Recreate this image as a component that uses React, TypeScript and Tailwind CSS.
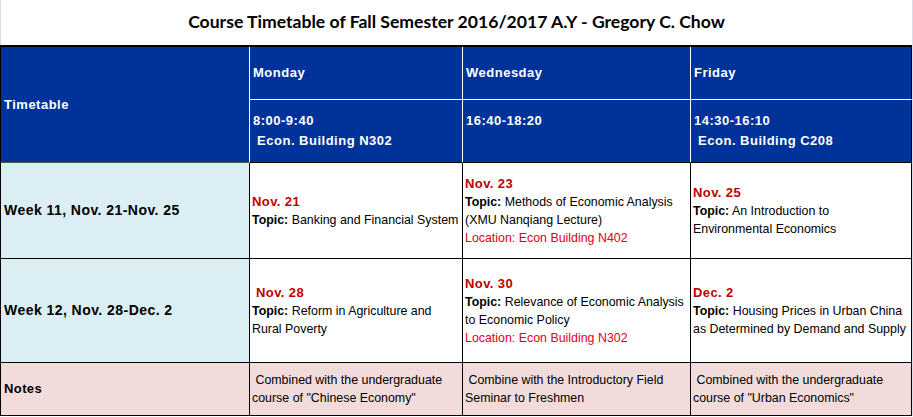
import React from "react";

const dateCls = "text-[#c00000] font-bold text-[13px] tracking-[0.4px]";
const headCls = "text-white font-bold text-[13px] tracking-[0.5px]";
const labelCls = "font-bold text-[14px] tracking-[0.45px]";

function Topic({ children }: { children: React.ReactNode }) {
  return (
    <div>
      <span className="font-bold">Topic:</span> {children}
    </div>
  );
}

export default function App() {
  return (
    <div className="w-[913px] h-[417px] bg-white font-['Liberation_Sans',Arial,sans-serif] text-[12.4px] text-black">
      {/* Title */}
      <div className="h-[45px] w-[913px] border-l border-r border-[#d8dde8] flex items-center justify-center">
        <h1 className="font-['Lato',sans-serif] font-bold text-[17.6px] text-black">
          Course Timetable of Fall Semester 2016/2017 A.Y - Gregory C. Chow
        </h1>
      </div>

      {/* Table */}
      <div className="w-[913px] border-r border-[#d8dde8]">
        <div className="w-[912px] border-t-2 border-l border-black grid grid-cols-[249px_213px_228px_221px]">
          {/* Header */}
          <div className={`row-span-2 h-[116px] bg-[#003399] border-r border-r-white border-b border-b-[#555] flex items-center pl-[3px] ${headCls}`}>
            Timetable
          </div>
          <div className={`h-[53px] bg-[#003399] border-r border-b border-white flex items-center pl-[3px] ${headCls}`}>
            Monday
          </div>
          <div className={`h-[53px] bg-[#003399] border-r border-b border-white flex items-center pl-[3px] ${headCls}`}>
            Wednesday
          </div>
          <div className={`h-[53px] bg-[#003399] border-r border-r-black border-b border-b-white flex items-center pl-[3px] ${headCls}`}>
            Friday
          </div>
          <div className={`h-[63px] bg-[#003399] border-r border-r-white border-b border-b-black flex flex-col justify-center pl-[3px] leading-[20px] ${headCls}`}>
            <div>8:00-9:40</div>
            <div>&nbsp;Econ. Building N302</div>
          </div>
          <div className={`h-[63px] bg-[#003399] border-r border-r-white border-b border-b-black flex flex-col justify-center pl-[3px] leading-[20px] ${headCls}`}>
            <div>16:40-18:20</div>
            <div>&nbsp;</div>
          </div>
          <div className={`h-[63px] bg-[#003399] border-r border-b border-black flex flex-col justify-center pl-[3px] leading-[20px] ${headCls}`}>
            <div>14:30-16:10</div>
            <div>&nbsp;Econ. Building C208</div>
          </div>

          {/* Week 11 */}
          <div className={`h-[96px] bg-[#daeef3] border-r border-b border-black flex items-center pl-[3px] ${labelCls}`}>
            Week 11, Nov. 21-Nov. 25
          </div>
          <div className="h-[96px] border-r border-b border-black flex flex-col justify-center pl-[2px] leading-[18px]">
            <div className={dateCls}>Nov. 21</div>
            <Topic>Banking and Financial System</Topic>
          </div>
          <div className="h-[96px] border-r border-b border-black flex flex-col justify-center pl-[2px] leading-[18px]">
            <div className={dateCls}>Nov. 23</div>
            <Topic>Methods of Economic Analysis</Topic>
            <div>(XMU Nanqiang Lecture)</div>
            <div className="text-[#e0001b]">Location: Econ Building N402</div>
          </div>
          <div className="h-[96px] border-r border-b border-black flex flex-col justify-center pl-[2px] leading-[18px]">
            <div className={dateCls}>Nov. 25</div>
            <Topic>An Introduction to</Topic>
            <div>Environmental Economics</div>
          </div>

          {/* Week 12 */}
          <div className={`h-[104px] bg-[#daeef3] border-r border-b border-black flex items-center pl-[3px] ${labelCls}`}>
            Week 12, Nov. 28-Dec. 2
          </div>
          <div className="h-[104px] border-r border-b border-black flex flex-col justify-center pl-[2px] leading-[18px]">
            <div className={dateCls}>&nbsp;Nov. 28</div>
            <Topic>Reform in Agriculture and</Topic>
            <div>Rural Poverty</div>
          </div>
          <div className="h-[104px] border-r border-b border-black flex flex-col justify-center pl-[2px] leading-[18px]">
            <div className={dateCls}>Nov. 30</div>
            <Topic>Relevance of Economic Analysis</Topic>
            <div>to Economic Policy</div>
            <div className="text-[#e0001b]">Location: Econ Building N302</div>
          </div>
          <div className="h-[104px] border-r border-b border-black flex flex-col justify-center pl-[2px] leading-[18px]">
            <div className={dateCls}>Dec. 2</div>
            <Topic>Housing Prices in Urban China</Topic>
            <div>as Determined by Demand and Supply</div>
          </div>

          {/* Notes */}
          <div className="h-[53px] bg-[#f2dcdb] border-r border-b border-black flex items-center pl-[3px] font-bold text-[13px] tracking-[0.4px]">
            Notes
          </div>
          <div className="h-[53px] bg-[#f2dcdb] border-r border-b border-black flex flex-col justify-center pl-[2px] leading-[18px]">
            <div>&nbsp;Combined with the undergraduate</div>
            <div>course of "Chinese Economy"</div>
          </div>
          <div className="h-[53px] bg-[#f2dcdb] border-r border-b border-black flex flex-col justify-center pl-[2px] leading-[18px]">
            <div>&nbsp;Combine with the Introductory Field</div>
            <div>Seminar to Freshmen</div>
          </div>
          <div className="h-[53px] bg-[#f2dcdb] border-r border-b border-black flex flex-col justify-center pl-[2px] leading-[18px]">
            <div>&nbsp;Combined with the undergraduate</div>
            <div>course of "Urban Economics"</div>
          </div>
        </div>
      </div>
    </div>
  );
}
